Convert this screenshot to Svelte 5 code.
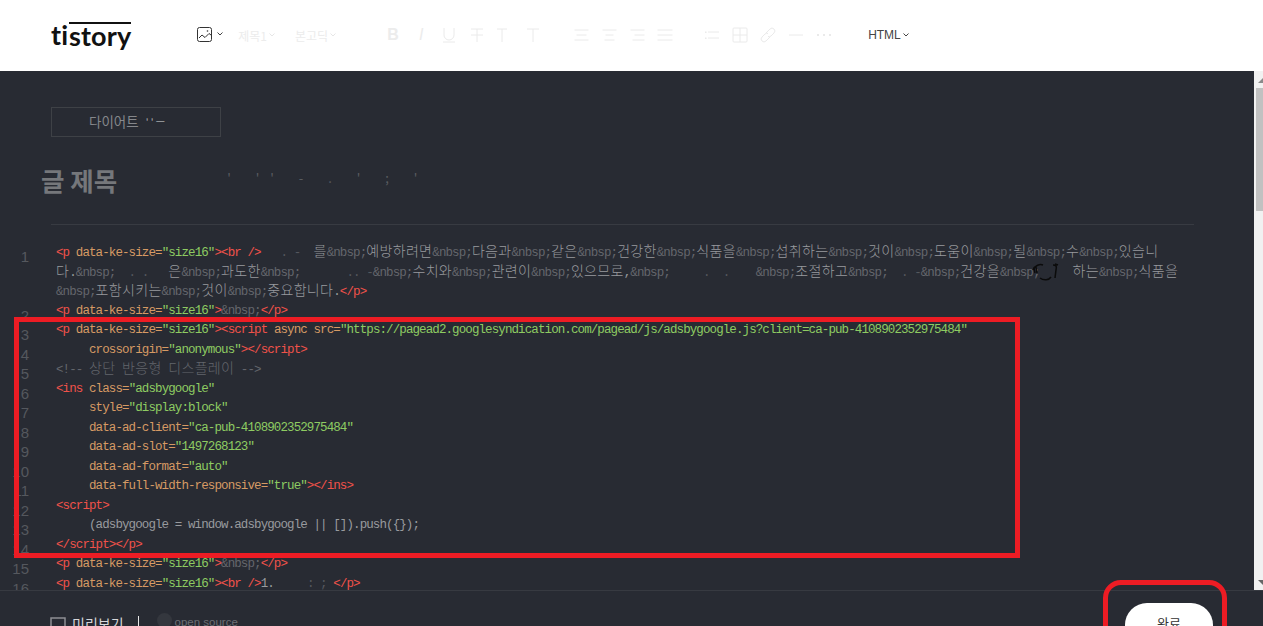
<script>
  const NB = ['n', '&nbsp;'];
  const P = [['r', '<p '], ['a', 'data-ke-size='], ['s', '"size16"'], ['r', '>']];
  const tx = (v) => ['t', v];
  const gap = (n) => ['g', n];
  const rest = (v) => ['x', v];
  // words separated by &nbsp;
  const words = (...list) => list.flatMap((w, i) => (i ? [NB, tx(w)] : [tx(w)]));

  const rows = [
    { n: 1, t: [...P, ['r', '<br />'], gap(3), rest('.'), gap(1), rest('-'), gap(2), tx('를'), NB, ...words('예방하려면', '다음과', '같은', '건강한', '식품을', '섭취하는', '것이', '도움이', '될', '수', '있습니')] },
    { t: [tx('다.'), NB, gap(2), rest('. .'), gap(3), tx('은'), NB, tx('과도한'), NB, gap(7), rest('.. -'), NB, ...words('수치와', '관련이', '있으므로,'), NB, gap(5), rest('.  .'), gap(4), NB, ...words('조절하고'), NB, gap(2), rest('. -'), NB, ...words('건강을'), NB, gap(5), ...words('하는', '식품을')] },
    { t: [NB, ...words('포함시키는', '것이', '중요합니다.'), ['r', '</p>']] },
    { n: 2, t: [...P, NB, ['r', '</p>']] },
    { n: 3, t: [...P, ['r', '<script '], ['a', 'async src='], ['s', '"https://pagead2.googlesyndication.com/pagead/js/adsbygoogle.js?client=ca-pub-4108902352975484"']] },
    { n: 4, t: [gap(5), ['a', 'crossorigin='], ['s', '"anonymous"'], ['r', '></' + 'script>']] },
    { n: 5, t: [['c', '<!-- 상단 반응형 디스플레이 -->']] },
    { n: 6, t: [['r', '<ins '], ['a', 'class='], ['s', '"adsbygoogle"']] },
    { n: 7, t: [gap(5), ['a', 'style='], ['s', '"display:block"']] },
    { n: 8, t: [gap(5), ['a', 'data-ad-client='], ['s', '"ca-pub-4108902352975484"']] },
    { n: 9, t: [gap(5), ['a', 'data-ad-slot='], ['s', '"1497268123"']] },
    { n: 10, t: [gap(5), ['a', 'data-ad-format='], ['s', '"auto"']] },
    { n: 11, t: [gap(5), ['a', 'data-full-width-responsive='], ['s', '"true"'], ['r', '></ins>']] },
    { n: 12, t: [['r', '<script>']] },
    { n: 13, t: [gap(5), tx('(adsbygoogle = window.adsbygoogle || []).push({});')] },
    { n: 14, t: [['r', '</' + 'script></p>']] },
    { n: 15, t: [...P, NB, ['r', '</p>']] },
    { n: 16, t: [...P, ['r', '<br />'], tx('1.'), gap(5), rest(': ;'), gap(1), ['r', '</p>']] },
  ];

  // hangul needs its own font and two mono cells per glyph
  function split(v) {
    return v.split(/([\uac00-\ud7a3]+)/).filter(Boolean).map((s) => ({ s, ko: /[\uac00-\ud7a3]/.test(s) }));
  }

  const formats = [
    { d: 'M1 2h14M3 7h10M1 12h14' },
    { d: 'M1 2h14M4 7h8M3 12h10' },
    { d: 'M1 2h14M5 7h10M3 12h12' },
    { d: 'M0 2h15M0 7h15M0 12h15' },
  ];
</script>

<div class="page">
  <header class="top">
    <div class="logo"><span>ti</span><span class="over">story</span></div>
    <div class="tools">
      <svg class="pic" width="16" height="16" viewBox="0 0 16 16" fill="none" stroke="#333" stroke-width="1">
        <rect x=".5" y=".5" width="14" height="14" rx="2" />
        <path d="M2 11l3-3 3 2.500 4-4 2 1.500" />
        <circle cx="10.500" cy="4" r=".8" fill="#333" stroke="none" />
      </svg>
      <svg class="chev first" width="6" height="4" viewBox="0 0 6 4" fill="none" stroke="#444"><path d="M.5.500L3 3 5.500.500" /></svg>
      <span class="faint h1">제목1</span>
      <svg class="chev" width="6" height="4" viewBox="0 0 6 4" fill="none" stroke="#e6e6e6"><path d="M.5.500L3 3 5.500.500" /></svg>
      <span class="faint font">본고딕</span>
      <svg class="chev" width="6" height="4" viewBox="0 0 6 4" fill="none" stroke="#e6e6e6"><path d="M.5.500L3 3 5.500.500" /></svg>

      <div class="group fmt">
        <span class="btn b">B</span>
        <span class="btn i">I</span>
        <svg class="btn" viewBox="0 0 28 16"><path d="M9 1v7a5 5 0 0 0 10 0V1M8 15h12" /></svg>
        <svg class="btn" viewBox="0 0 28 16"><path d="M8 2h12M14 2v13M8 8h12" /></svg>
        <svg class="btn nudge" viewBox="0 0 28 16"><path d="M9 2h10M14 2v13" /></svg>
        <svg class="btn" viewBox="0 0 28 16"><path d="M8 2h12M14 2v13" /></svg>
      </div>
      <div class="group align">
        {#each formats as f}
          <svg class="btn" viewBox="-6.500 -1 28 16"><path d={f.d} /></svg>
        {/each}
      </div>
      <div class="group ins">
        <svg class="btn" viewBox="0 0 28 16"><path d="M10 5h11M10 11h11" /><path class="dot" d="M7 4.500h1.500v1.500H7zM7 10.500h1.500V12H7z" /></svg>
        <svg class="btn" viewBox="0 0 28 16"><rect x="7" y="1" width="14" height="14" rx="1" /><path d="M14 1v14M7 8h14" /></svg>
        <svg class="btn" viewBox="0 0 28 16"><path d="M12 6l4-4a2.800 2.800 0 0 1 4 4l-3 3a2.800 2.800 0 0 1-3 .5M16 10l-4 4a2.800 2.800 0 0 1-4-4l3-3a2.800 2.800 0 0 1 3-.5" /></svg>
        <svg class="btn" viewBox="0 0 28 16"><path d="M7 8h14" /></svg>
        <svg class="btn" viewBox="0 0 28 16"><path class="dot" d="M7 7h2v2H7zM13 7h2v2h-2zM19 7h2v2h-2z" /></svg>
      </div>
      <span class="html">HTML</span>
      <svg class="chev" width="6" height="4" viewBox="0 0 6 4" fill="none" stroke="#444"><path d="M.5.500L3 3 5.500.500" /></svg>
    </div>
  </header>

  <main class="body">
    <div class="editor">
      <div class="category"><span>다이어트</span><span class="left">' ' ㅡ</span></div>
      <h1 class="title">글 제목<span class="left">' '' - . ' ; '</span></h1>
      <div class="rule"></div>
      <div class="code">
        {#each rows as row}
          <div class="row">
            <span class="num">{row.n ?? ''}</span>
            <span class="line">
              {#each row.t as [k, v]}
                {#if k === 'g'}
                  <span class="gap" style="width: {v * 6.6}px"></span>
                {:else}
                  <span class={k}>{#each split(v) as part}{#if part.ko}<span class="ko">{part.s}</span>{:else}{part.s}{/if}{/each}</span>
                {/if}
              {/each}
            </span>
          </div>
        {/each}
      </div>
    </div>
    <div class="scrollbar">
      <i class="up"></i>
      <div class="thumb"></div>
      <i class="down"></i>
    </div>
  </main>

  <footer class="bottom">
    <svg class="monitor" width="16" height="12" viewBox="0 0 16 12" fill="none" stroke="#8d8f94" stroke-width="1.500"><rect x="1" y="1" width="14" height="9" /></svg>
    <span class="preview">미리보기</span>
    <span class="sep"></span>
    <span class="circle"></span>
    <span class="oss">open source</span>
    <button class="done">완료</button>
  </footer>

  <!-- annotations painted over the screenshot -->
  <div class="mark-box"></div>
  <div class="mark-round"></div>
  <svg class="scribble" width="30" height="20" viewBox="0 0 30 20" fill="none" stroke="#0b0b0b" stroke-width="1.500">
    <path d="M2 8c2-5 7-6 10-5M3 6l1 5M5 5l1 6M9 16c4 3 9 2 11-1M22 3c3 0 4 1 3 5l-1 8M24 2l3 1" />
  </svg>
</div>

<style>
  :global(body) { margin: 0; background: #282b33; }
  .page {
    position: relative;
    display: flex;
    flex-direction: column;
    height: 626px;
    overflow: hidden;
    font-family: "Noto Sans CJK KR", "Liberation Sans", sans-serif;
    background: #282b33;
  }

  .top { display: flex; align-items: center; height: 71px; flex: none; background: #fff; }
  .logo {
    display: flex;
    margin-left: 51px;
    font-family: Lato, sans-serif;
    font-weight: 700;
    font-size: 27px;
    line-height: 24px;
    letter-spacing: 0.1px;
    color: #111;
  }
  .logo .over { border-top: 2px solid #111; margin-top: -1px; margin-left: 1px; }
  .tools { display: flex; align-items: center; margin: -1px 0 0 66px; }
  .pic { margin-right: 2px; }
  .chev { margin-left: 2px; flex: none; }
  .chev.first { margin-top: -3px; }
  .faint { font-size: 12px; color: #ececec; }
  .h1 { margin-left: 15px; }
  .font { margin-left: 20px; }
  .group { display: flex; align-items: center; }
  .fmt { margin-left: 43px; }
  .align { margin-left: 20px; }
  .ins { margin-left: 19px; }
  .btn {
    width: 28px;
    height: 16px;
    flex: none;
    fill: none;
    stroke: #eaeaea;
    stroke-width: 1;
    text-align: center;
    line-height: 16px;
    color: #ececec;
    font-family: "Liberation Sans", sans-serif;
    font-size: 16px;
  }
  .btn.b { font-weight: 700; }
  .btn.i { font-style: italic; font-weight: 400; }
  .btn.nudge { margin-left: -3px; margin-right: 3px; }
  .dot { fill: #eaeaea; stroke: none; }
  .html { margin-left: 30px; font-family: "Liberation Sans", sans-serif; font-size: 12px; color: #444; }

  .body { flex: 1; min-height: 0; display: flex; overflow: hidden; }
  .editor { flex: 1; min-width: 0; }
  .category {
    box-sizing: border-box;
    display: flex;
    align-items: center;
    gap: 7px;
    width: 170px;
    height: 30px;
    margin: 36px 0 0 51px;
    padding: 0 0 2px 37px;
    border: 1px solid #3e4146;
    font-size: 13.500px;
    color: #85878b;
  }
  .category .left { font-size: 10px; color: #a9abae; }
  .title {
    margin: 25px 0 0 41px;
    height: 36px;
    font-size: 25.500px;
    line-height: 36px;
    font-weight: 700;
    color: #75777b;
    white-space: pre;
  }
  .title .left { margin-left: 110px; font-size: 13px; line-height: 1; vertical-align: 8px; font-weight: 400; letter-spacing: 11px; color: #5a5c61; }
  .rule { width: 1143px; height: 1px; margin: 26px 0 0 51px; background: #383b42; }

  .code { margin-top: 18px; font-family: "Liberation Mono", monospace; font-size: 12.500px; letter-spacing: -0.900px; line-height: 19.500px; color: #8f9195; }
  .row { display: flex; height: 19.500px; white-space: pre; }
  .num {
    flex: none;
    width: 29px;
    margin-right: 27px;
    padding-top: 4px;
    letter-spacing: 0;
    text-align: right;
    font-family: "Liberation Sans", sans-serif;
    font-size: 15px;
    color: #55585e;
  }
  .line { display: block; }
  .gap { display: inline-block; }
  .ko { font-family: "Noto Sans CJK KR", sans-serif; font-size: 14px; font-weight: 300; letter-spacing: 0.320px; line-height: 1; }
  .r { color: #f0524a; }
  .a { color: #d69a64; }
  .s { color: #8ecb62; }
  .n { color: #64666c; }
  .t { color: #989a9e; }
  .c { color: #63666c; }
  .x { color: #55585e; }

  .scrollbar { position: relative; flex: none; width: 9px; background: #f1f1f1; }
  .thumb { width: 7px; height: 123px; margin: 17px 0 0 2px; background: #c1c1c1; }
  .up, .down { position: absolute; right: 0; width: 0; height: 0; border-style: solid; }
  .up { top: 7px; border-width: 0 0 5px 5px; border-color: transparent transparent #8a8a8a; }
  .down { bottom: 5px; border-width: 5px 0 0 5px; border-color: #666 transparent transparent; }

  .bottom {
    box-sizing: border-box;
    position: relative;
    flex: none;
    display: flex;
    align-items: flex-start;
    height: 36px;
    padding: 26px 0 0 50px;
    border-top: 1px solid #373a41;
  }
  .monitor { flex: none; }
  .preview { margin: -3px 0 0 6px; font-size: 14px; line-height: 18px; color: #d6d7d9; }
  .sep { width: 1px; height: 12px; margin: -1px 0 0 14px; background: #e8e8e8; }
  .circle { width: 15px; height: 15px; margin: -4px 0 0 18px; border-radius: 50%; background: #34373e; }
  .oss { margin: -2px 0 0 3px; font-family: "Liberation Sans", sans-serif; font-size: 11.500px; line-height: 14px; color: #6c6e73; }
  .done {
    position: absolute;
    left: 1125px;
    top: 12px;
    width: 88px;
    height: 44px;
    padding: 0 0 6px;
    border: 0;
    border-radius: 22px;
    background: #fff;
    font-family: inherit;
    font-size: 13px;
    color: #333;
  }

  .mark-box {
    position: absolute;
    left: 14px;
    top: 317px;
    box-sizing: border-box;
    width: 1006px;
    height: 241px;
    border: 5px solid #ed1c24;
  }
  .mark-round {
    position: absolute;
    left: 1103px;
    top: 580px;
    box-sizing: border-box;
    width: 124px;
    height: 70px;
    border: 5px solid #ed1c24;
    border-radius: 18px;
  }
  .scribble { position: absolute; left: 1031px; top: 262px; }
</style>
